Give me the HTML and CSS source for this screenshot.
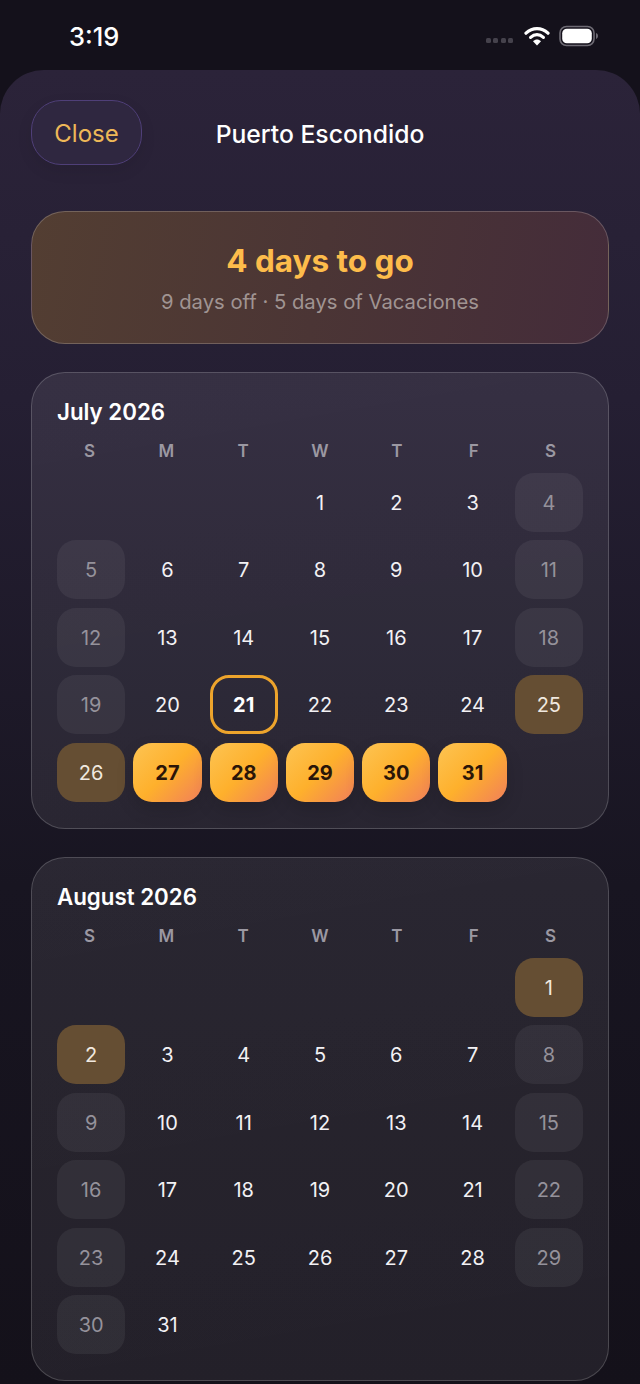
FILE: index.html
```html
<!DOCTYPE html>
<html lang="en">
<head>
<meta charset="utf-8">
<title>Puerto Escondido</title>
<link rel="stylesheet" href="styles.css">
</head>
<body>
<div class="status">
  <span class="time">3:19</span>
  <div class="status-icons">
    <div class="signal"><i></i><i></i><i></i><i></i></div>
    <svg class="wifi" width="26" height="20" viewBox="0 0 26 20"><path d="M2 7.2C8.600 1 17.400 1 24 7.2" fill="none" stroke="#fff" stroke-width="3.2" stroke-linecap="round"/><path d="M6.600 11.400C10.600 7.800 15.400 7.800 19.400 11.400" fill="none" stroke="#fff" stroke-width="3.2" stroke-linecap="round"/><path d="M9 15.200C11.600 13 14.400 13 17 15.200L13 19.400Z" fill="#fff"/></svg>
    <svg class="battery" width="40" height="22" viewBox="0 0 40 22"><rect x="1" y="1.500" width="34" height="19" rx="6.500" fill="none" stroke="#6d6a73" stroke-width="1.600"/><rect x="3.200" y="3.700" width="29.600" height="14.600" rx="4.600" fill="#fff"/><path d="M37 8v6c1.300-.4 2-1.600 2-3s-.7-2.600-2-3z" fill="#6d6a73"/></svg>
  </div>
</div>
<main class="sheet">
  <header class="head">
    <button class="close">Close</button>
    <h1 class="title">Puerto Escondido</h1>
  </header>
  <section class="banner">
    <div class="count">4 days to go</div>
    <div class="sub">9 days off · 5 days of Vacaciones</div>
  </section>
  <section class="card card-july">
    <h2 class="month">July 2026</h2>
    <div class="week"><span>S</span><span>M</span><span>T</span><span>W</span><span>T</span><span>F</span><span>S</span></div>
    <div class="days">
      <span></span><span></span><span></span><span class="d">1</span><span class="d">2</span><span class="d">3</span><span class="d we">4</span>
      <span class="d we">5</span><span class="d">6</span><span class="d">7</span><span class="d">8</span><span class="d">9</span><span class="d">10</span><span class="d we">11</span>
      <span class="d we">12</span><span class="d">13</span><span class="d">14</span><span class="d">15</span><span class="d">16</span><span class="d">17</span><span class="d we">18</span>
      <span class="d we">19</span><span class="d">20</span><span class="d today">21</span><span class="d">22</span><span class="d">23</span><span class="d">24</span><span class="d off">25</span>
      <span class="d off">26</span><span class="d sel">27</span><span class="d sel">28</span><span class="d sel">29</span><span class="d sel">30</span><span class="d sel">31</span><span></span>
    </div>
  </section>
  <section class="card card-aug">
    <h2 class="month">August 2026</h2>
    <div class="week"><span>S</span><span>M</span><span>T</span><span>W</span><span>T</span><span>F</span><span>S</span></div>
    <div class="days">
      <span></span><span></span><span></span><span></span><span></span><span></span><span class="d off">1</span>
      <span class="d off">2</span><span class="d">3</span><span class="d">4</span><span class="d">5</span><span class="d">6</span><span class="d">7</span><span class="d we">8</span>
      <span class="d we">9</span><span class="d">10</span><span class="d">11</span><span class="d">12</span><span class="d">13</span><span class="d">14</span><span class="d we">15</span>
      <span class="d we">16</span><span class="d">17</span><span class="d">18</span><span class="d">19</span><span class="d">20</span><span class="d">21</span><span class="d we">22</span>
      <span class="d we">23</span><span class="d">24</span><span class="d">25</span><span class="d">26</span><span class="d">27</span><span class="d">28</span><span class="d we">29</span>
      <span class="d we">30</span><span class="d">31</span><span></span><span></span><span></span><span></span><span></span>
    </div>
  </section>
</main>
</body>
</html>
```
FILE: styles.css
```css
* { box-sizing: border-box; }
html, body { margin: 0; height: 1384px; overflow: hidden; }
body {
  background: #14111b;
  font-family: Inter, "Liberation Sans", sans-serif;
  color: #fff;
}
.status {
  height: 70px;
  display: flex;
  align-items: center;
  justify-content: space-between;
  padding: 2px 41px 0 69px;
}
.time { font-size: 25.500px; font-weight: 500; color: #fff; }
.status-icons { display: flex; align-items: center; }
.signal { display: flex; gap: 2.500px; margin: 9px 11px 0 0; }
.signal i { width: 5px; height: 5px; border-radius: 1.500px; background: #45424c; }
.wifi { margin-right: 9px; }
.sheet {
  height: 1314px;
  border-radius: 44px 44px 0 0;
  background: linear-gradient(180deg, #2b2339 0%, #251f33 25%, #181521 62%, #14111a 100%);
  padding: 30px 31px 0;
}
.head { position: relative; height: 65px; display: flex; align-items: center; margin-bottom: 46px; }
.close {
  width: 111px;
  height: 65px;
  border-radius: 30px;
  border: 1.500px solid #4f3f78;
  background: #2f2740;
  color: #eeb858;
  font: 400 24px Inter, "Liberation Sans", sans-serif;
  padding: 2px 0 0;
  box-shadow: 0 6px 16px rgba(0, 0, 0, .08);
}
.title {
  position: absolute;
  left: 0;
  right: 0;
  margin: 0;
  padding-top: 2px;
  text-align: center;
  font-size: 24.700px;
  font-weight: 500;
  color: #fff;
  pointer-events: none;
}
.banner {
  height: 133px;
  border-radius: 34px;
  border: 1.500px solid rgba(255, 255, 255, .2);
  background: linear-gradient(100deg, #533e32 0%, #4b3535 50%, #442c3a 100%);
  display: flex;
  flex-direction: column;
  align-items: center;
  margin-bottom: 28px;
}
.count { margin-top: 29px; font-size: 31.500px; line-height: 40px; font-weight: 700; color: #fdbc4b; }
.sub { margin-top: 6px; font-size: 20.250px; line-height: 30px; color: #a09492; }
.card {
  border-radius: 34px;
  border: 1px solid rgba(255, 255, 255, .18);
  background: linear-gradient(170deg, rgba(255, 255, 255, .08), rgba(255, 255, 255, .065));
  padding: 25px 25px 26px;
  margin-bottom: 28.500px;
}
.month { margin: 0 0 15px; font-size: 22.300px; line-height: 28px; font-weight: 600; color: #fff; }
.week {
  display: grid;
  grid-template-columns: repeat(7, 1fr);
  column-gap: 8px;
  margin: 0 -4px 12px 0;
  text-align: center;
  font-size: 17px;
  line-height: 20px;
  font-weight: 600;
  color: #9b98a2;
}
.week span { padding-right: 4px; }
.days {
  display: grid;
  grid-template-columns: repeat(7, 1fr);
  grid-auto-rows: 59px;
  gap: 8.400px 8px;
}
.d {
  display: flex;
  align-items: center;
  justify-content: center;
  border-radius: 19px;
  padding-top: 1px;
  font-size: 20px;
  color: #f2f1f4;
}
.we { background: rgba(255, 255, 255, .06); color: #95929b; }
.off { background: #654e33; color: #f0e8df; }
.today { border: 3px solid #eda42c; font-weight: 700; color: #fff; }
.sel {
  background: linear-gradient(135deg, #fdc453 0%, #feb02c 50%, #f17f5a 100%);
  color: #2a1508;
  font-weight: 700;
  box-shadow: 0 8px 18px rgba(0, 0, 0, .14);
}
```
